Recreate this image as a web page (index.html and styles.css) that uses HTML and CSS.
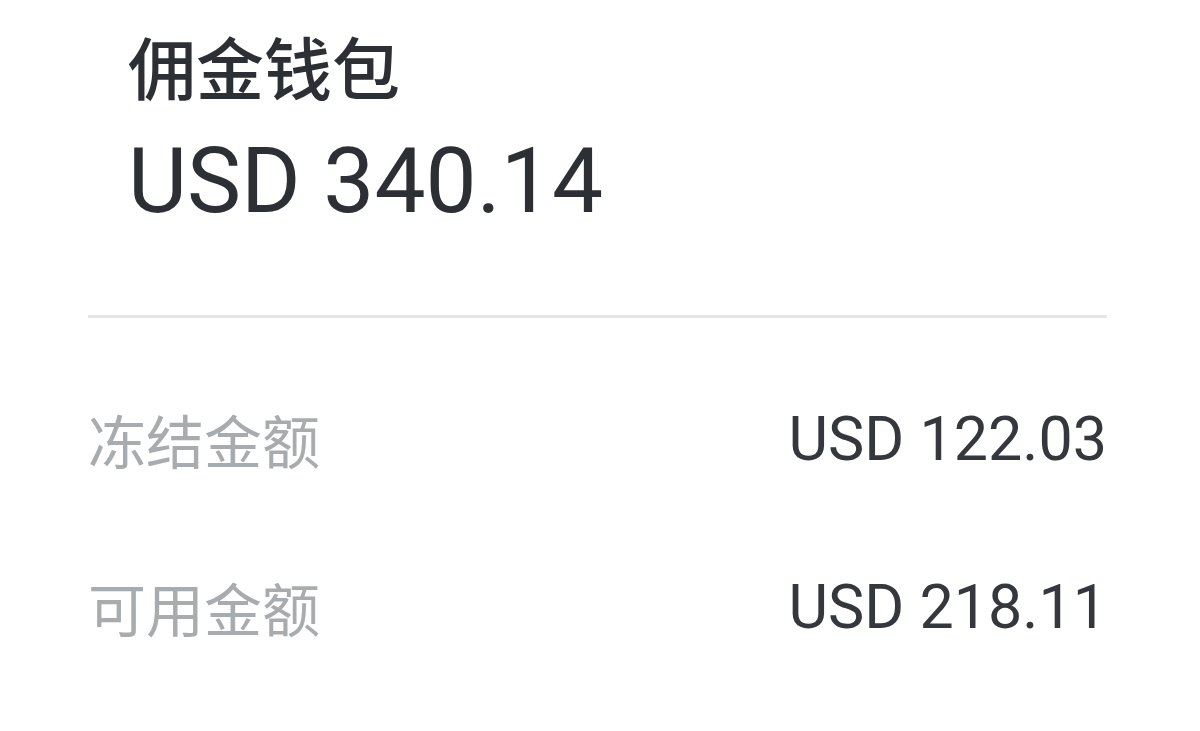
FILE: index.html
```html
<!DOCTYPE html>
<html lang="zh-CN">
<head>
  <meta charset="UTF-8" />
  <meta name="viewport" content="width=device-width, initial-scale=1.0"/>
  <title>佣金钱包</title>
  <link rel="stylesheet" href="styles.css">
</head>
<body>
  <div class="wallet">
    <div class="wallet-head">
      <h1 class="wallet-title">佣金钱包</h1>
      <div class="wallet-total">USD 340.14</div>
    </div>
    <div class="divider"></div>
    <div class="row">
      <span class="row-label">冻结金额</span>
      <span class="row-value">USD 122.03</span>
    </div>
    <div class="row">
      <span class="row-label">可用金额</span>
      <span class="row-value">USD 218.11</span>
    </div>
  </div>
</body>
</html>
```

FILE: styles.css
```css
body { margin: 0; background: #fff; font-family: Roboto, "Noto Sans CJK SC", sans-serif; color: #2c3035; }
.wallet { padding: 25px 93px 0 88px; }
.wallet-head { padding-left: 40px; }
.wallet-title { margin: 0; font-size: 68px; line-height: 82px; font-weight: 500; font-family: "Noto Sans CJK SC", sans-serif; }
.wallet-total { margin-top: 24px; font-size: 91px; line-height: 100px; }
.divider { height: 3px; background: #e6e6e6; margin-top: 84px; margin-bottom: 37px; }
.row { display: flex; justify-content: space-between; align-items: center; height: 168px; }
.row-label { font-size: 58px; color: #a9acae; font-family: "Noto Sans CJK SC", sans-serif; }
.row-value { font-size: 61px; color: #34383d; }
```
